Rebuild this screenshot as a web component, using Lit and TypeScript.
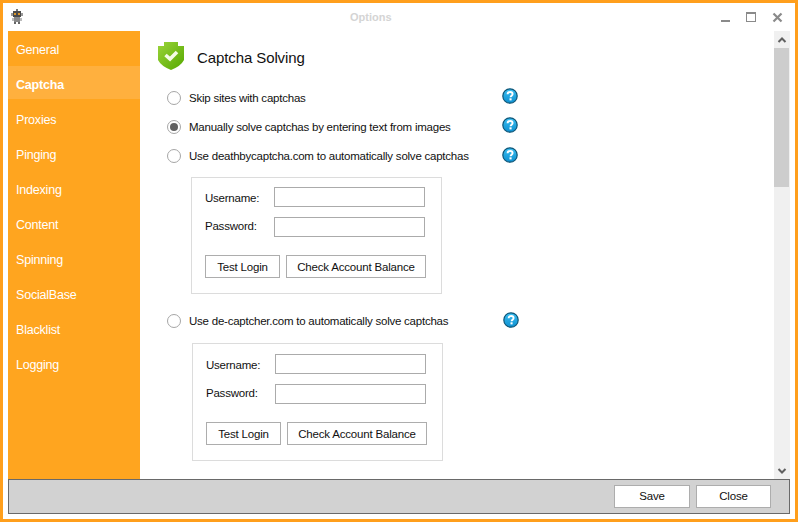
import { LitElement, html, css, svg } from "lit";
import { customElement } from "lit/decorators.js";

const NAV = ["General","Captcha","Proxies","Pinging","Indexing","Content","Spinning","SocialBase","Blacklist","Logging"];

const help = (low = false) => html`<svg class="help ${low ? "low" : ""}" width="18" height="18" viewBox="0 0 18 18">
  <defs><linearGradient id="hg" x1="0" y1="0" x2="0" y2="1"><stop offset="0" stop-color="#3cc0f2"/><stop offset="1" stop-color="#0c8fd0"/></linearGradient></defs>
  <circle cx="9" cy="9" r="7.2" fill="url(#hg)" stroke="#0d5577" stroke-width="1.2"/>
  <path d="M6.6 7.3C6.6 5.8 7.7 5 9.1 5C10.6 5 11.6 5.8 11.6 7C11.6 8.6 9.6 8.7 9.6 10.2" fill="none" stroke="#fff" stroke-width="1.9"/>
  <rect x="8.5" y="11.3" width="2.1" height="2.1" fill="#fff"/>
</svg>`;

@customElement("app-root")
export class AppRoot extends LitElement {
  static styles = css`
    :host { display:block; width:798px; height:522px; box-sizing:border-box; border:3px solid #ff9f1c; background:#fff; overflow:hidden;
      font-family:"Liberation Sans",Arial,sans-serif; font-size:11.5px; letter-spacing:-.23px; color:#111; }
    .title { height:28px; display:flex; align-items:center; position:relative; }
    .robot { margin-left:7px; }
    .title-text { position:absolute; left:347px; top:7px; font-size:11px; line-height:14px; font-weight:bold; letter-spacing:0; color:#d4d4d4; }
    .ctrls { margin-left:auto; display:block; }
    .main { display:flex; height:448px; margin:0 5px; }
    .nav { width:132px; background:#ffa51f; flex:none; display:flex; flex-direction:column; }
    .nav-item { height:35px; box-sizing:border-box; padding:12px 0 0 8px; font-size:12.5px; letter-spacing:-.2px; line-height:15px; color:#fff; }
    .nav-item.active { font-weight:bold; background:linear-gradient(#ffb03e 0 33px, transparent 33px); }
    .content { flex:1; min-width:0; padding:11px 0 0 18px; overflow:hidden; }
    .heading { display:flex; align-items:center; height:28px; gap:13px; margin-bottom:13px; font-size:15px; letter-spacing:-.1px; }
    .heading span { padding-top:2px; }
    .heading svg { display:block; }
    .row { display:flex; align-items:center; height:29px; }
    .radio { width:14px; height:14px; box-sizing:border-box; border:1px solid #a6a6a6; border-radius:50%; margin:1px 8px 0 9px; background:#fff; display:flex; align-items:center; justify-content:center; flex:none; }
    .radio.on::after { content:""; width:8px; height:8px; border-radius:50%; background:#606060; }
    .label { width:312px; flex:none; white-space:nowrap; }
    .label.wide { width:313px; }
    .help { display:block; margin-top:-3px; }
    .help.low { margin-top:-1px; }
    .box { width:251px; box-sizing:border-box; border:1px solid #dcdcdc; margin:7px 0 0 33px; padding:9px 15px 14px 13px; }
    .box.b1 { height:117px; margin-bottom:12px; }
    .box.b2 { height:118px; margin-left:34px; margin-top:8px; padding-top:10px; }
    .field { display:flex; align-items:center; height:20px; margin-bottom:10px; }
    .field label { width:69px; flex:none; padding-top:1px; }
    .field.f2 label { padding-top:0; padding-bottom:2px; }
    .field .inp { width:151px; height:20px; box-sizing:border-box; border:1px solid #ababab; background:#fff; }
    .field.f2 { margin-bottom:18px; }
    .btns { display:flex; gap:6px; }
    .btn { height:23px; box-sizing:border-box; border:1px solid #adadad; background:#fff; display:flex; align-items:center; justify-content:center; font-size:11.5px; letter-spacing:-.18px; color:#111; }
    .w75 { width:75px; }
    .w140 { width:140px; }
    .bar { width:16px; flex:none; background:#f0f0f0; display:flex; flex-direction:column; align-items:center; }
    .bar .arrow { height:17px; display:flex; align-items:center; justify-content:center; }
    .thumb { width:15px; height:139px; background:#cdcdcd; align-self:flex-start; }
    .spring { flex:1; }
    .footer { margin:0 5px; height:35px; box-sizing:border-box; border:1px solid #696969; background:#d2d2d2; display:flex; align-items:center; justify-content:flex-end; gap:6px; padding:0 18px 1px 0; }
    .footer .btn { width:76px; }
    .footer .btn.c { width:75px; }
  `;

  private field(name: string, extra = "") {
    return html`<div class="field ${extra}"><label>${name}:</label><div class="inp"></div></div>`;
  }
  private box(cls: string) {
    return html`<div class="box ${cls}">
      ${this.field("Username")}
      ${this.field("Password", "f2")}
      <div class="btns"><div class="btn w75">Test Login</div><div class="btn w140">Check Account Balance</div></div>
    </div>`;
  }

  render() {
    return html`
      <div class="title">
        <svg class="robot" width="14" height="16" viewBox="0 0 14 16">
          <rect x="6" y="0" width="2" height="2" fill="#777"/>
          <rect x="3" y="2" width="8" height="6" fill="#4a4a4a"/>
          <rect x="4" y="4" width="2" height="2" fill="#d9952b"/><rect x="8" y="4" width="2" height="2" fill="#d9952b"/>
          <rect x="1" y="4" width="2" height="3" fill="#999"/><rect x="11" y="4" width="2" height="3" fill="#999"/>
          <rect x="4" y="8" width="6" height="5" fill="#888"/>
          <rect x="2" y="9" width="2" height="3" fill="#bbb"/><rect x="10" y="9" width="2" height="3" fill="#bbb"/>
          <rect x="4" y="13" width="2" height="2" fill="#666"/><rect x="8" y="13" width="2" height="2" fill="#666"/>
        </svg>
        <div class="title-text">Options</div>
        <svg class="ctrls" width="90" height="28" viewBox="0 0 90 28">
          ${svg`<rect x="16" y="17" width="9" height="2" fill="#8a8a8a"/>
          <rect x="41.5" y="9.5" width="9" height="9" fill="none" stroke="#8a8a8a"/><rect x="41" y="9" width="10" height="2" fill="#8a8a8a"/>
          <path d="M68.5 10.5L76.5 18.5M76.5 10.5L68.5 18.5" stroke="#8a8a8a" stroke-width="2.2" fill="none"/>`}
        </svg>
      </div>
      <div class="main">
        <div class="nav">${NAV.map(n => html`<div class="nav-item ${n === "Captcha" ? "active" : ""}">${n}</div>`)}</div>
        <div class="content">
          <div class="heading">
            <svg width="26" height="28" viewBox="0 0 26 28">
              <defs><linearGradient id="sg" x1="0" y1="0" x2="1" y2="1"><stop offset="0" stop-color="#9bd43a"/><stop offset="1" stop-color="#55a800"/></linearGradient></defs>
              <path d="M0 4L6 4L6 0L20 0L20 4L26 4L26 18Q23 24 13 28Q3 24 0 18Z" fill="url(#sg)"/>
              <path d="M7.5 13L12 17L19 10" fill="none" stroke="#f4fbe6" stroke-width="3.6"/>
            </svg>
            <span>Captcha Solving</span>
          </div>
          <div class="row"><span class="radio"></span><span class="label">Skip sites with captchas</span>${help()}</div>
          <div class="row"><span class="radio on"></span><span class="label">Manually solve captchas by entering text from images</span>${help()}</div>
          <div class="row"><span class="radio"></span><span class="label">Use deathbycaptcha.com to automatically solve captchas</span>${help(true)}</div>
          ${this.box("b1")}
          <div class="row"><span class="radio"></span><span class="label wide">Use de-captcher.com to automatically solve captchas</span>${help(true)}</div>
          ${this.box("b2")}
        </div>
        <div class="bar">
          <div class="arrow"><svg width="10" height="8" viewBox="0 0 10 8"><path d="M1.5 6L5 2.5L8.5 6" fill="none" stroke="#606060" stroke-width="2"/></svg></div>
          <div class="thumb"></div>
          <div class="spring"></div>
          <div class="arrow"><svg width="10" height="8" viewBox="0 0 10 8"><path d="M1.5 2L5 5.5L8.5 2" fill="none" stroke="#606060" stroke-width="2"/></svg></div>
        </div>
      </div>
      <div class="footer"><div class="btn">Save</div><div class="btn c">Close</div></div>
    `;
  }
}
